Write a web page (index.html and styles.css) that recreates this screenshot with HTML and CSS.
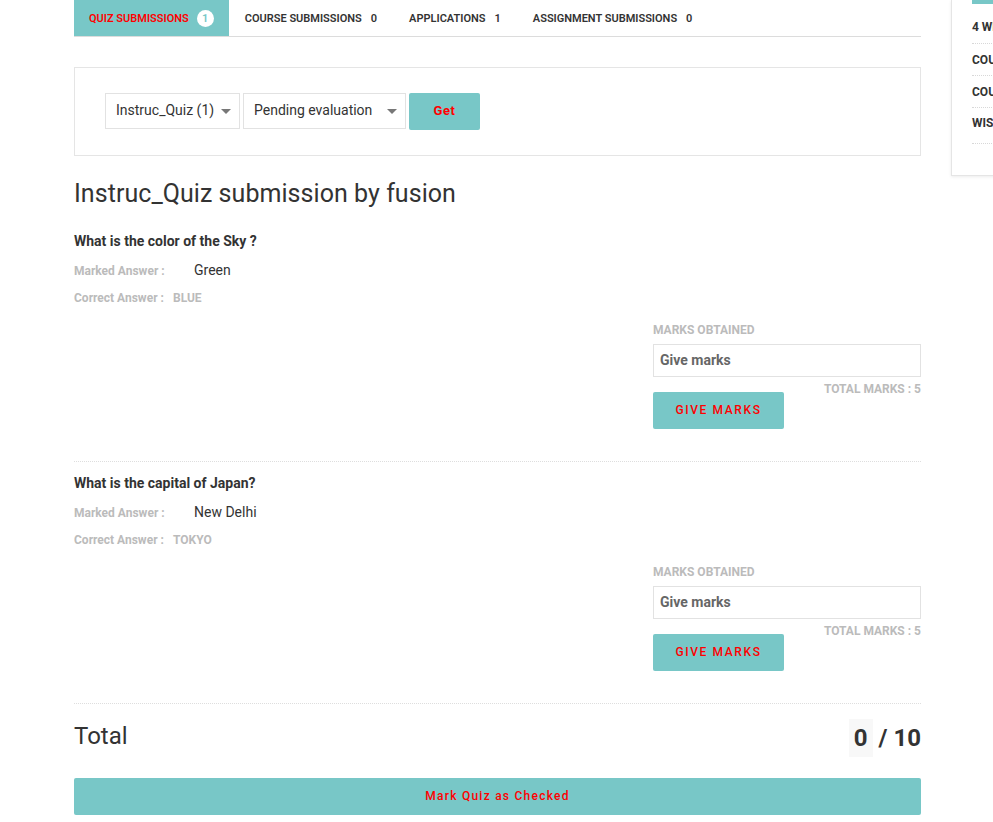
FILE: index.html
```html
<!DOCTYPE html>
<html>
<head>
<meta charset="utf-8">
<link rel="stylesheet" href="styles.css">
</head>
<body>
<div class="page">
  <main class="main">
    <nav class="tabs">
      <div class="tab active">Quiz Submissions <span class="badge">1</span></div>
      <div class="tab">Course Submissions <span class="count">0</span></div>
      <div class="tab">Applications <span class="count">1</span></div>
      <div class="tab">Assignment Submissions <span class="count">0</span></div>
    </nav>

    <section class="filter">
      <div class="select sel-quiz"><span>Instruc_Quiz (1)</span><i class="caret"></i></div>
      <div class="select sel-status"><span>Pending evaluation</span><i class="caret"></i></div>
      <button class="btn btn-get">Get</button>
    </section>

    <h1 class="title">Instruc_Quiz submission by fusion</h1>

    <div class="question">
      <div class="q-text">What is the color of the Sky ?</div>
      <div class="row"><span class="label">Marked Answer :</span><span class="marked">Green</span></div>
      <div class="row"><span class="label">Correct Answer :</span><span class="correct">BLUE</span></div>
      <div class="marks">
        <div class="marks-label">MARKS OBTAINED</div>
        <div class="marks-input">Give marks</div>
        <div class="total-marks">TOTAL MARKS : 5</div>
        <button class="btn btn-give">GIVE MARKS</button>
      </div>
    </div>

    <div class="question">
      <div class="q-text">What is the capital of Japan?</div>
      <div class="row"><span class="label">Marked Answer :</span><span class="marked">New Delhi</span></div>
      <div class="row"><span class="label">Correct Answer :</span><span class="correct">TOKYO</span></div>
      <div class="marks">
        <div class="marks-label">MARKS OBTAINED</div>
        <div class="marks-input">Give marks</div>
        <div class="total-marks">TOTAL MARKS : 5</div>
        <button class="btn btn-give">GIVE MARKS</button>
      </div>
    </div>

    <div class="total-row">
      <div class="total-label">Total</div>
      <div class="total-score"><span class="score">0</span><span class="slash">/ 10</span></div>
    </div>

    <button class="btn btn-check">Mark Quiz as Checked</button>
  </main>

  <aside class="sidebar">
    <div class="side-top"></div>
    <div class="side-item">4 WEEK COURSES</div>
    <div class="side-item">COURSES</div>
    <div class="side-item">COURSE SUBMISSIONS</div>
    <div class="side-item">WISHLIST</div>
  </aside>
</div>
</body>
</html>
```

FILE: styles.css
```css
* { box-sizing: border-box; }
html, body {
  margin: 0;
  padding: 0;
  background: #fff;
  overflow: hidden;
}
body {
  font-family: Roboto, "Liberation Sans", Arial, sans-serif;
  color: #333;
}
.page {
  display: flex;
  align-items: flex-start;
  gap: 30px;
  padding-left: 74px;
  width: 1300px;
}
.main {
  width: 847px;
  flex: none;
}

/* Tabs */
.tabs {
  display: flex;
  height: 37px;
  border-bottom: 1px solid #dcdcdc;
}
.tab {
  height: 36px;
  display: flex;
  align-items: center;
  padding: 0 16px;
  font-size: 11px;
  font-weight: 600;
  text-transform: uppercase;
  color: #333;
  white-space: nowrap;
}
.tab.active {
  background: #78c7c7;
  color: #f00;
  padding: 0 15px 0 15px;
}
.count { margin-left: 9px; }
.badge {
  display: inline-flex;
  align-items: center;
  justify-content: center;
  width: 17px;
  height: 17px;
  border-radius: 50%;
  background: #fff;
  color: #78c7c7;
  font-size: 11px;
  margin-left: 8px;
}

/* Filter */
.filter {
  margin-top: 30px;
  border: 1px solid #e5e5e5;
  height: 89px;
  padding: 25px 30px 0 30px;
  display: flex;
  align-items: flex-start;
  gap: 3px;
}
.select {
  height: 36px;
  border: 1px solid #e2e2e2;
  display: flex;
  align-items: center;
  justify-content: space-between;
  padding: 0 8px 2px 10px;
  font-size: 14px;
  color: #333;
}
.sel-quiz { width: 135px; }
.sel-status { width: 163px; }
.caret {
  width: 0;
  height: 0;
  border-left: 5px solid transparent;
  border-right: 5px solid transparent;
  border-top: 5px solid #777;
  margin-top: 3px;
}
.btn {
  border: none;
  background: #78c7c7;
  color: #f00;
  font-family: Roboto, "Liberation Sans", Arial, sans-serif;
  cursor: pointer;
  border-radius: 2px;
  padding: 0;
}
.btn-get {
  width: 71px;
  height: 37px;
  font-size: 13px;
  font-weight: 700;
  letter-spacing: 0.5px;
  padding-bottom: 2px;
}

/* Title */
.title {
  margin: 23px 0 0;
  font-size: 25px;
  line-height: 30px;
  font-weight: 400;
  color: #333;
  letter-spacing: 0.05px;
}

/* Questions */
.question {
  padding-top: 22px;
  padding-bottom: 32px;
  border-bottom: 1px dotted #dedede;
}
.question + .question { padding-top: 11px; }
.q-text {
  font-size: 14px;
  font-weight: 700;
  line-height: 20px;
  color: #333;
}
.row {
  display: flex;
  align-items: center;
  height: 27px;
}
.q-text + .row { margin-top: 6px; }
.label {
  font-size: 12px;
  font-weight: 700;
  color: #bbb;
  width: 99px;
}
.marked {
  margin-left: 21px;
  font-size: 14px;
  color: #333;
  margin-top: -1px;
}
.correct {
  font-size: 12px;
  font-weight: 700;
  color: #bbb;
}
.marks {
  margin-left: 579px;
  width: 268px;
  margin-top: 9px;
}
.marks-label {
  font-size: 12px;
  font-weight: 700;
  color: #bbb;
  line-height: 20px;
}
.marks-input {
  margin-top: 4px;
  height: 33px;
  border: 1px solid #e2e2e2;
  display: flex;
  align-items: center;
  padding: 0 0 2px 6px;
  font-size: 14px;
  font-weight: 700;
  color: #666;
}
.total-marks {
  height: 15px;
  line-height: 25px;
  text-align: right;
  font-size: 12px;
  font-weight: 700;
  color: #bbb;
}
.btn-give {
  display: block;
  width: 131px;
  height: 37px;
  font-size: 12px;
  font-weight: 500;
  letter-spacing: 1.6px;
  padding-bottom: 2px;
}

/* Total */
.total-row {
  margin-top: 15px;
  display: flex;
  align-items: center;
  justify-content: space-between;
  height: 38px;
}
.total-label {
  font-size: 24px;
  font-weight: 400;
  color: #333;
  margin-top: -4px;
}
.total-score {
  display: flex;
  align-items: stretch;
  height: 38px;
  font-size: 24px;
  font-weight: 700;
  color: #333;
}
.score {
  background: #f8f8f8;
  width: 24px;
  display: flex;
  align-items: center;
  justify-content: center;
}
.slash {
  display: flex;
  align-items: center;
  margin-left: 6px;
}
.btn-check {
  display: block;
  margin-top: 21px;
  width: 847px;
  height: 37px;
  font-size: 12px;
  font-weight: 500;
  letter-spacing: 1.25px;
  padding-bottom: 2px;
}

/* Sidebar */
.sidebar {
  flex: none;
  width: 260px;
  height: 176px;
  border: 1px solid #e5e5e5;
  border-top: none;
  box-shadow: 0 1px 3px rgba(0,0,0,0.08);
  padding: 0 20px;
}
.side-top {
  height: 4px;
  background: #78c7c7;
}
.side-item {
  height: 32px;
  display: flex;
  align-items: center;
  padding-bottom: 0;
  border-bottom: 1px dotted #d8d8d8;
  font-size: 12px;
  font-weight: 700;
  color: #333;
  white-space: nowrap;
}
.side-top + .side-item { height: 40px; padding-top: 8px; padding-bottom: 1px; }
.side-item:last-child { height: 36px; padding-bottom: 5px; }
```
